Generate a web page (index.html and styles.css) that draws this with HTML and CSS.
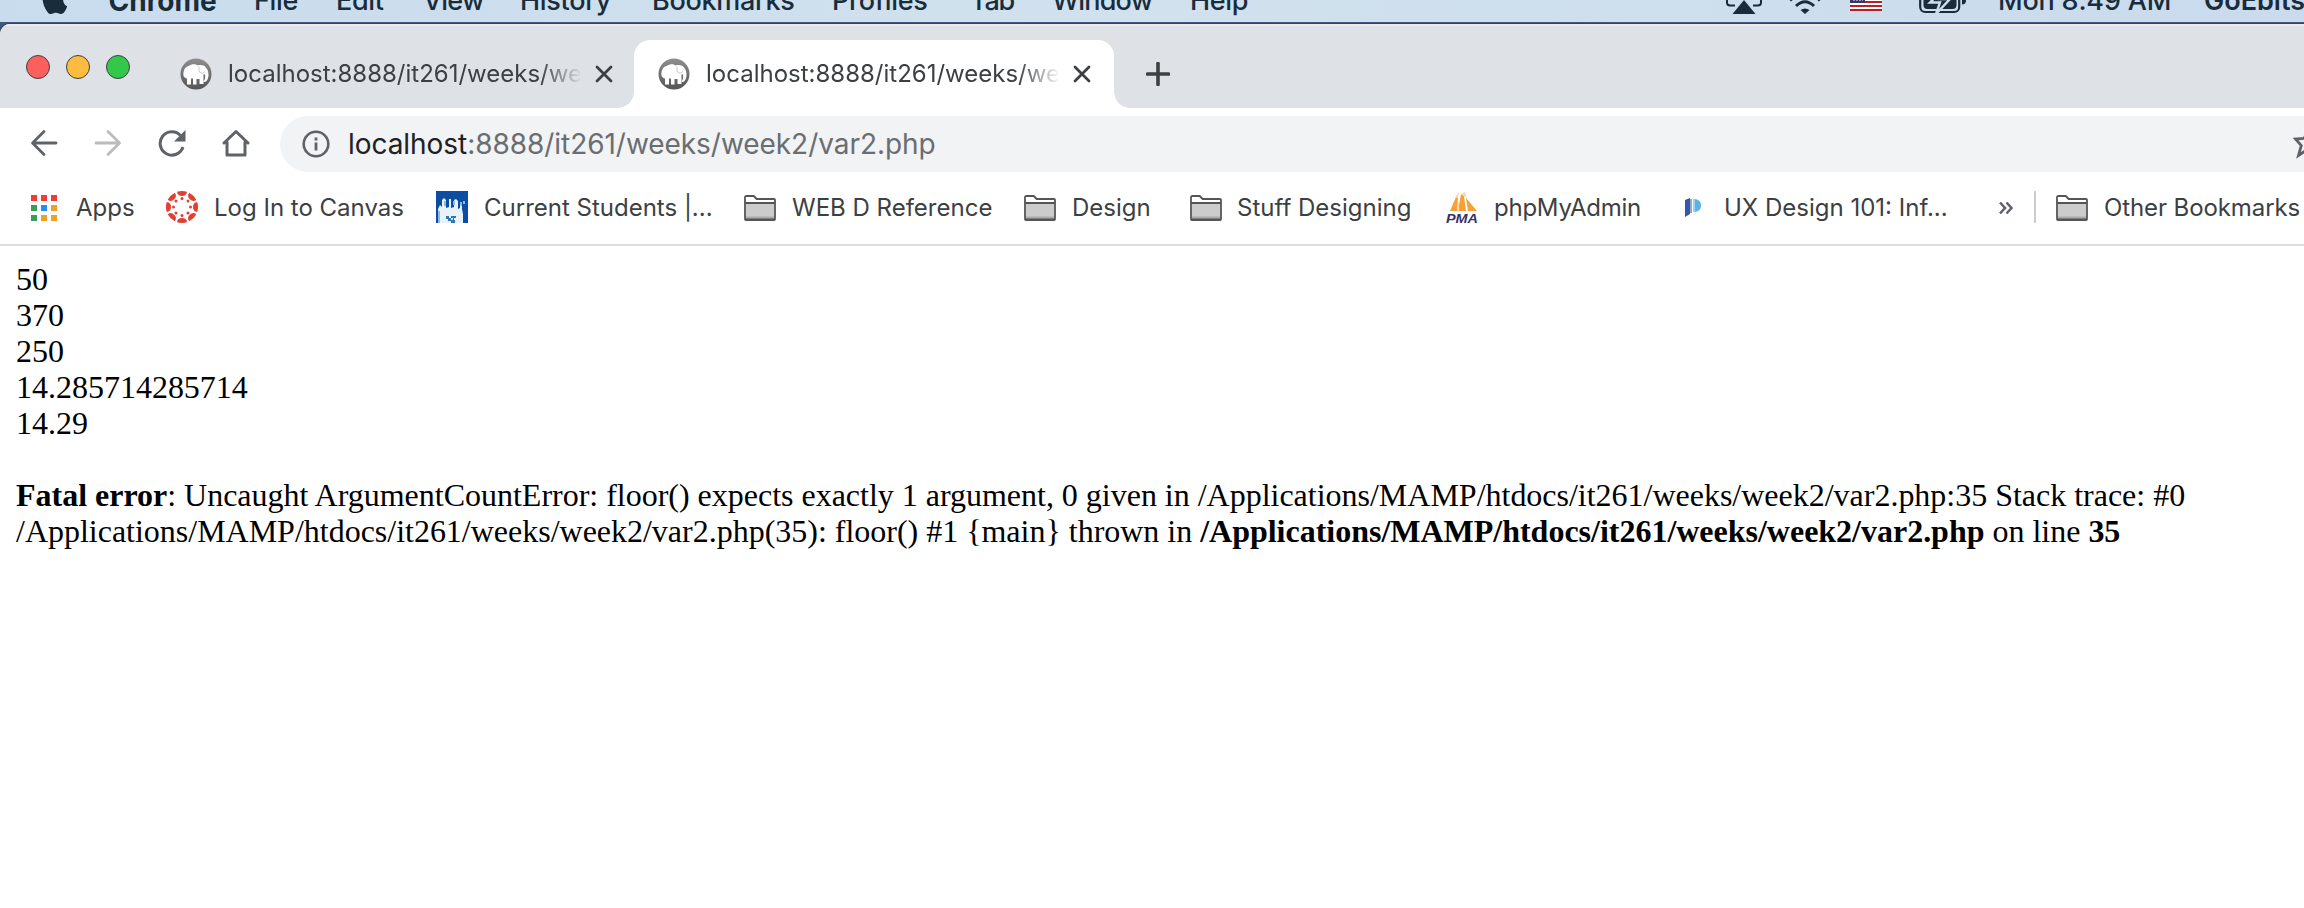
FILE: index.html
```
<!DOCTYPE html>
<html lang="en">
<head>
<meta charset="utf-8">
<title>localhost:8888/it261/weeks/week2/var2.php</title>
<link rel="stylesheet" href="styles.css">
</head>
<body>
<svg width="0" height="0" class="defs">
  <defs>
    <linearGradient id="ring" x1="0" y1="0" x2="0" y2="1"><stop offset="0" stop-color="#8f8f8f"/><stop offset="1" stop-color="#555"/></linearGradient>
    <symbol id="elephant" viewBox="0 0 32 32">
      <circle cx="16" cy="16" r="15.5" fill="url(#ring)"/>
      <path fill="#fff" d="M3.500 18c-.5-5 1-9 5-10 3-2 7-2.500 9-.5 3-1 6.500-.5 8.500 2 2.500 3 3.500 8 1.500 12-1 2.500-3.500 3-4 2 1.500-2 2-4 1.500-6.500-.5-1.500-1.500-1-1.500 0v9h-4v-5h-3v5.500h-3.500V20.500h-2v6H7v-6c-1.500 0-2.500-1-3.500-2.500z"/>
      <path d="M19 8.500v5l3 2 3-2" fill="none" stroke="#bbb" stroke-width=".8"/>
    </symbol>
    <symbol id="folder" viewBox="0 0 32 26">
      <path d="M1 24V2.500Q1 1 2.500 1h7.200l3 3H30q1 0 1 1v19q0 1-1 1H2q-1 0-1-1z" fill="#fff" stroke="#555" stroke-width="1.800"/>
      <path d="M2 8.500h28V24H2z" fill="#ccc"/>
      <path d="M2 21.500h28V24H2z" fill="#aaa"/>
      <path d="M1 8h30M1 24.500h30" stroke="#555" stroke-width="1.800"/>
    </symbol>
    <symbol id="close" viewBox="0 0 18 18"><path d="M2 2l14 14M16 2L2 16" stroke="#3c4043" stroke-width="2.800" stroke-linecap="round"/></symbol>
  </defs>
</svg>

<div class="menubar">
  <div class="menus">
    <svg class="apple" width="28" height="32" viewBox="0 0 28 32"><path fill="#192c3b" d="M20 0c-2 0-4 1.500-5.800 1.500S10.500 0 8 0C4 0 1 4 1 10s2 14 5.500 18c1 1.600 2.300 2.300 4 2 1.800-.6 2.500-1.300 4.500-1.300s2.800.8 4.500 1.300c1.700.3 3-.8 4-2.200 1.500-2 2.300-4 2.600-5.500-5-2.400-5.500-10-.5-13C25 3 22 0 20 0z"/></svg>
    <span class="app">Chrome</span><span>File</span><span>Edit</span><span class="view">View</span><span>History</span><span>Bookmarks</span><span>Profiles</span><span class="tight">Tab</span><span class="view">Window</span><span>Help</span>
  </div>
  <div class="status">
    <svg width="38" height="32" viewBox="0 0 38 32"><path d="M10 21.500H5q-3 0-3-3V-3h34v21.500q0 3-3 3h-5" fill="none" stroke="#192c3b" stroke-width="2"/><path d="M19 16L30.500 30h-23z" fill="#192c3b"/></svg>
    <svg width="32" height="32" viewBox="0 0 32 32"><g fill="none" stroke="#192c3b" stroke-width="3"><path d="M1 16.500q15-16 30 0" stroke-dasharray="3 30 4"/><path d="M7 22q9-8.500 18 0"/></g><path d="M16 30l-4.500-4q4.500-3 9 0z" fill="#192c3b"/></svg>
    <svg width="32" height="22" viewBox="0 0 32 22"><path fill="#fff" d="M0 0h32v22H0z"/><path stroke="#b82025" stroke-width="2" d="M0 1h32M0 5h32M0 9h32M0 13h32M0 17h32M0 21h32"/><path fill="#39356d" d="M0 0h15v14H0z"/><path stroke="#fff" stroke-dasharray="2 1" d="M3 11h10"/></svg>
    <svg class="battery" width="48" height="28" viewBox="0 0 48 28"><rect x="1.200" y="-2" width="39" height="27" rx="5" fill="none" stroke="#192c3b" stroke-width="2.200"/><path d="M4.500 0h33v18q0 4-4 4h-25q-4 0-4-4z" fill="#192c3b"/><path d="M26 1L11 15.500h10L17 27 31 12H21z" fill="#192c3b" stroke="#cddfed" stroke-width="2.400"/><path d="M43 9.500q4 0 4 4t-4 4z" fill="#192c3b"/></svg>
    <span class="clock">Mon 8:49 AM</span><span class="user">GoEbits</span>
  </div>
</div>

<div class="desktop">
<div class="window">
  <div class="tabstrip">
    <div class="lights"><i class="red"></i><i class="yellow"></i><i class="green"></i></div>
    <div class="tab">
      <svg class="fav" width="32" height="32"><use href="#elephant"/></svg>
      <span class="title">localhost:8888/it261/weeks/week2/var2.php</span>
      <svg width="18" height="18"><use href="#close"/></svg>
    </div>
    <div class="tab active">
      <svg class="fav" width="32" height="32"><use href="#elephant"/></svg>
      <span class="title">localhost:8888/it261/weeks/week2/var2.php</span>
      <svg width="18" height="18"><use href="#close"/></svg>
    </div>
    <svg class="plus" width="24" height="24" viewBox="0 0 24 24"><path d="M12 1.500v21M1.500 12h21" stroke="#3c4043" stroke-width="3.600" stroke-linecap="round"/></svg>
  </div>

  <div class="toolbar">
    <svg class="nav" width="28" height="28" viewBox="0 0 28 28"><path d="M26 14H3M14 2.500L2.500 14 14 25.500" fill="none" stroke="#5f6368" stroke-width="2.800" stroke-linecap="round" stroke-linejoin="round"/></svg>
    <svg class="nav" width="28" height="28" viewBox="0 0 28 28"><path d="M2 14h23M14 2.500L25.500 14 14 25.500" fill="none" stroke="#babcbe" stroke-width="2.800" stroke-linecap="round" stroke-linejoin="round"/></svg>
    <svg class="nav" width="28" height="28" viewBox="0 0 28 28"><path d="M25 18A11.700 11.700 0 1 1 22.500 6.500" fill="none" stroke="#5f6368" stroke-width="3"/><path d="M27.500 1v11.500H16z" fill="#5f6368"/></svg>
    <svg class="nav" width="28" height="28" viewBox="0 0 28 28"><path d="M2 14L14 2.500 26 14M5 13v13h18V13" fill="none" stroke="#5f6368" stroke-width="3" stroke-linejoin="round" stroke-linecap="round"/></svg>
    <div class="address">
      <svg width="28" height="28" viewBox="0 0 28 28"><circle cx="14" cy="14" r="12.300" fill="none" stroke="#5f6368" stroke-width="2.600"/><path d="M14 7.500v3M14 12.500v8" stroke="#5f6368" stroke-width="2.800"/></svg>
      <span class="url">localhost<span class="path">:8888/it261/weeks/week2/var2.php</span></span>
      <svg class="star" width="11" height="32" viewBox="0 0 11 32"><path d="M15 2l3.300 7.800 8.700.7-6.600 5.500 2.100 8.300L15 20l-9.500 6.500L8.300 16.500 2.500 10l8.500-.7z" fill="none" stroke="#5f6368" stroke-width="2.800"/></svg>
    </div>
  </div>

  <div class="bookmarks">
    <svg class="apps" width="26" height="26" viewBox="0 0 26 26"><path fill="#f23b37" d="M0 0h6v6H0zM10 0h6v6h-6zM20 0h6v6h-6z"/><path fill="#3a9c5b" d="M0 10h6v6H0zM0 20h6v6H0z"/><path fill="#258bf5" d="M10 10h6v6h-6z"/><path fill="#f0a028" d="M20 10h6v6h-6zM10 20h6v6h-6zM20 20h6v6h-6z"/></svg>
    <span>Apps</span>
    <svg width="32" height="32" viewBox="-16 -16 32 32"><g fill="#e23f33">
      <g id="petal"><path d="M-5-15.200Q0-16.800 5-15.200Q4.500-11 0-11T-5-15.200z"/><circle cy="-8.500" r="1.500"/></g>
      <use href="#petal" transform="rotate(45)"/><use href="#petal" transform="rotate(90)"/><use href="#petal" transform="rotate(135)"/><use href="#petal" transform="rotate(180)"/><use href="#petal" transform="rotate(225)"/><use href="#petal" transform="rotate(270)"/><use href="#petal" transform="rotate(315)"/></g></svg>
    <span>Log In to Canvas</span>
    <svg width="32" height="32" viewBox="0 0 32 32"><path fill="#0b4da2" d="M0 0h32v32H0z"/><path fill="#e8f2fb" d="M2 32V18l2-4 2 2V9l2-2 2 2v8l3-1V8h2v9l3-1V9l2-1 2 2v8l2-1v-5h2v6l1 5v9z"/><path fill="#8db9e3" d="M2 20h2v12H2zM8 10h2v5H8zM17 10h2v4h-2zM24 11h2v4h-2zM27 10h2v3h-2z"/><path fill="#2e75b9" d="M10 25h3v2h2v-2h5v2h-2v2h1v3h-4v-2h-3v-2h-2z"/><path fill="#cfe3f5" d="M15 27h2v2h-2z"/></svg>
    <span>Current Students |...</span>
    <svg class="fold" width="32" height="26"><use href="#folder"/></svg>
    <span>WEB D Reference</span>
    <svg class="fold" width="32" height="26"><use href="#folder"/></svg>
    <span>Design</span>
    <svg class="fold" width="32" height="26"><use href="#folder"/></svg>
    <span>Stuff Designing</span>
    <svg width="32" height="32" viewBox="0 0 32 32"><path fill="#f7a036" d="M4 20L10 6l2 1-1 13zM12 20L15 3l3 2 2 15zM22 20L20 7l11 13z"/><path fill="#fbd9a8" d="M9 6l4-5-1 6zM15 3l4-2 2 6-3-2zM12 14l1-6v12h-2z"/><text x="0" y="31.500" class="pma" textLength="32" lengthAdjust="spacingAndGlyphs">PMA</text></svg>
    <span class="php">phpMyAdmin</span>
    <svg class="ux" width="32" height="32" viewBox="0 0 32 32"><path fill="#3559a5" d="M5 9l5-2v16l-5 3z"/><path fill="#8ca6d6" d="M10 8h2v14h-2z"/><path fill="#58b4e5" d="M14 8q7 0 7 6.500T14 21z"/><path fill="#9bd4f2" d="M13 8h2v13h-2z"/></svg>
    <span>UX Design 101: Inf...</span>
    <svg class="more" width="14" height="14" viewBox="0 0 14 14"><path d="M1 1.500L6 7l-5 5.500M7.500 1.500l5 5.500-5 5.500" fill="none" stroke="#5f6368" stroke-width="2.500"/></svg>
    <i class="sep"></i>
    <svg class="fold" width="32" height="26"><use href="#folder"/></svg>
    <span class="other">Other Bookmarks</span>
  </div>

  <div class="page">50<br>370<br>250<br>14.285714285714<br>14.29<br><br><b>Fatal error</b>: Uncaught ArgumentCountError: floor() expects exactly 1 argument, 0 given in /Applications/MAMP/htdocs/it261/weeks/week2/var2.php:35 Stack trace: #0<br>/Applications/MAMP/htdocs/it261/weeks/week2/var2.php(35): floor() #1 {main} thrown in <b>/Applications/MAMP/htdocs/it261/weeks/week2/var2.php</b> on line <b>35</b></div>
</div>
</div>
</body>
</html>
```
FILE: styles.css
```
* { box-sizing: border-box; }
html, body { margin: 0; height: 100%; overflow: hidden; }
body {
  display: flex;
  flex-direction: column;
  background: #fff;
  font-family: Inter, "Liberation Sans", sans-serif;
  color: #3c4043;
  white-space: nowrap;
}
svg { display: block; flex: none; }
.defs { position: absolute; }

/* system menu bar, upper half is off screen */
.menubar {
  flex: none;
  height: 22px;
  overflow: hidden;
  display: flex;
  justify-content: space-between;
  background: linear-gradient(90deg, #c9dced, #d1e1ee 50%, #c9dbec);
  font-size: 27px;
  font-weight: 500;
  line-height: 46px;
  letter-spacing: -0.3px;
  color: #192c3b;
}
.menus, .status { margin-top: -22px; height: 44px; display: grid; }
.menus {
  padding-left: 41px;
  grid-template-columns: 67.5px 145.5px 82px 87px 97px 132px 180px 138px 82px 138px 80px;
}
.apple { margin-top: 6px; }
.app { font-weight: 700; font-size: 28px; letter-spacing: 0; }
.view { letter-spacing: -0.8px; }
.tight { letter-spacing: -1.2px; }
.status {
  width: 579px;
  grid-template-columns: 64px 61px 69px 79px 206px 100px;
}
.status svg { margin-top: 6px; }
.status svg:nth-child(3) { margin-top: 11px; }
.status .battery { margin-top: 9px; }
.clock { letter-spacing: -0.2px; }
.user { font-weight: 600; overflow: hidden; letter-spacing: 0; }

.desktop { flex: 1; display: flex; background: #41587c; padding-top: 2px; }
.window {
  flex: 1;
  min-width: 0;
  background: #fff;
  border-top-left-radius: 10px;
  overflow: hidden;
  box-shadow: 0 0 0 1px #33465a;
}

.tabstrip {
  height: 84px;
  display: flex;
  background: #dee1e6;
  border-top: 2px solid #ebebee;
  padding: 14px 0 0 26px;
}
.lights { display: flex; gap: 16px; width: 128px; padding-top: 15px; }
.lights i { width: 24px; height: 24px; border-radius: 50%; border: 1px solid; }
.red { background: #fc605c; border-color: #e6504b; }
.yellow { background: #fdbc40; border-color: #e3a93a; }
.green { background: #34c84a; border-color: #2bb03e; }
.tab {
  width: 480px;
  height: 68px;
  padding-left: 26px;
  display: flex;
  align-items: center;
}
.fav { margin-right: 16px; }
.title {
  width: 352px;
  margin-right: 15px;
  overflow: hidden;
  font-size: 24px;
  line-height: 36px;
  -webkit-mask-image: linear-gradient(90deg, #000 312px, transparent 354px);
  mask-image: linear-gradient(90deg, #000 312px, transparent 354px);
}
.active {
  position: relative;
  padding-left: 24px;
  background: #fff;
  border-radius: 16px 16px 0 0;
}
.active::before, .active::after {
  content: "";
  position: absolute;
  bottom: 0;
  width: 16px;
  height: 16px;
}
.active::before { left: -16px; background: radial-gradient(circle at 0 0, transparent 15.500px, #fff 16px); }
.active::after { right: -16px; background: radial-gradient(circle at 100% 0, transparent 15.500px, #fff 16px); }
.plus { margin: 22px 0 0 32px; }

.toolbar { height: 72px; display: flex; padding: 8px 0 0 30px; }
.nav { margin: 13px 36px 0 0; }
.address {
  flex: 1;
  height: 56px;
  margin-left: -6px;
  border-radius: 28px 0 0 28px;
  background: #f1f3f4;
  display: flex;
  align-items: center;
  padding-left: 22px;
}
.url { flex: 1; margin-left: 18px; font-size: 28px; letter-spacing: -0.05px; color: #202124; }
.path { color: #6a6d71; }
.star { margin-top: 2px; }

.bookmarks {
  height: 66px;
  border-bottom: 2px solid #dadce0;
  display: grid;
  align-items: center;
  padding: 0 0 10px 31px;
  grid-template-columns:
    45px 90px 48px 222px 48px 260px 48px 232px 48px 118px
    47px 209px 48px 186px 44px 275px 35px 22px 48px 205px;
  font-size: 24px;
  line-height: 36px;
}
.bookmarks span { padding-top: 2px; }
.bookmarks .php { letter-spacing: -0.25px; }
.bookmarks .other { letter-spacing: -0.1px; }
.apps, .fold { margin-top: 1px; }
.more { margin-top: 1px; }
.sep { width: 2px; height: 32px; background: #ccc; }

.page {
  padding: 15px 16px;
  font: 32px/36px "Liberation Serif", serif;
  letter-spacing: -0.012px;
  color: #000;
}
.pma { font: italic 700 12px "Liberation Sans", sans-serif; fill: #353468; }
```
